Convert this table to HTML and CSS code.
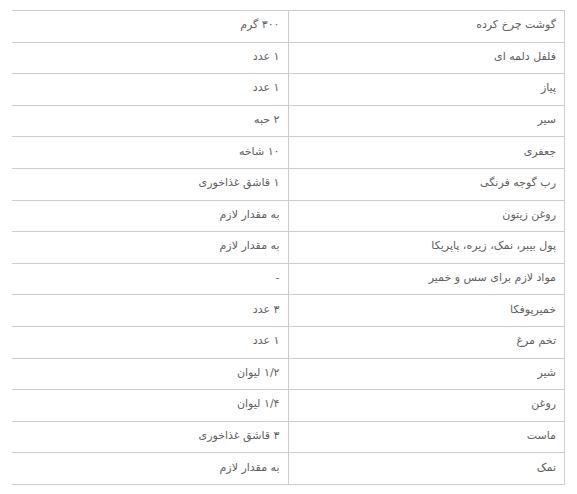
FILE: index.html
```html
<!DOCTYPE html>
<html lang="fa" dir="rtl">
<head>
<meta charset="utf-8">
<link rel="stylesheet" href="styles.css">
</head>
<body>
<table class="ingredients">
<tbody>
<tr><td>گوشت چرخ کرده</td><td>۳۰۰ گرم</td></tr>
<tr><td>فلفل دلمه ای</td><td>۱ عدد</td></tr>
<tr><td>پیاز</td><td>۱ عدد</td></tr>
<tr><td>سیر</td><td>۲ حبه</td></tr>
<tr><td>جعفری</td><td>۱۰ شاخه</td></tr>
<tr><td>رب گوجه فرنگی</td><td>۱ قاشق غذاخوری</td></tr>
<tr><td>روغن زیتون</td><td>به مقدار لازم</td></tr>
<tr><td>پول بیبر، نمک، زیره، پاپریکا</td><td>به مقدار لازم</td></tr>
<tr><td>مواد لازم برای سس و خمیر</td><td>-</td></tr>
<tr><td>خمیرپوفکا</td><td>۳ عدد</td></tr>
<tr><td>تخم مرغ</td><td>۱ عدد</td></tr>
<tr><td>شیر</td><td>۱/۲ لیوان</td></tr>
<tr><td>روغن</td><td>۱/۴ لیوان</td></tr>
<tr><td>ماست</td><td>۳ قاشق غذاخوری</td></tr>
<tr><td>نمک</td><td>به مقدار لازم</td></tr>
</tbody>
</table>
</body>
</html>
```
FILE: styles.css
```css
html, body {
  background: #ffffff;
}
body {
  margin: 10px 12px 0 12px;
  font-family: "DejaVu Sans", "Noto Sans", sans-serif;
  font-size: 11px;
  color: #5e5e5e;
}
.ingredients {
  width: 554px;
  border-collapse: collapse;
  table-layout: fixed;
}
.ingredients td {
  border: 1px solid #cccccc;
  height: 31.6px;
  padding: 0 8px 3px 8px;
  text-align: right;
  vertical-align: middle;
  box-sizing: border-box;
}
.ingredients td:first-child {
  width: 50%;
}
```
